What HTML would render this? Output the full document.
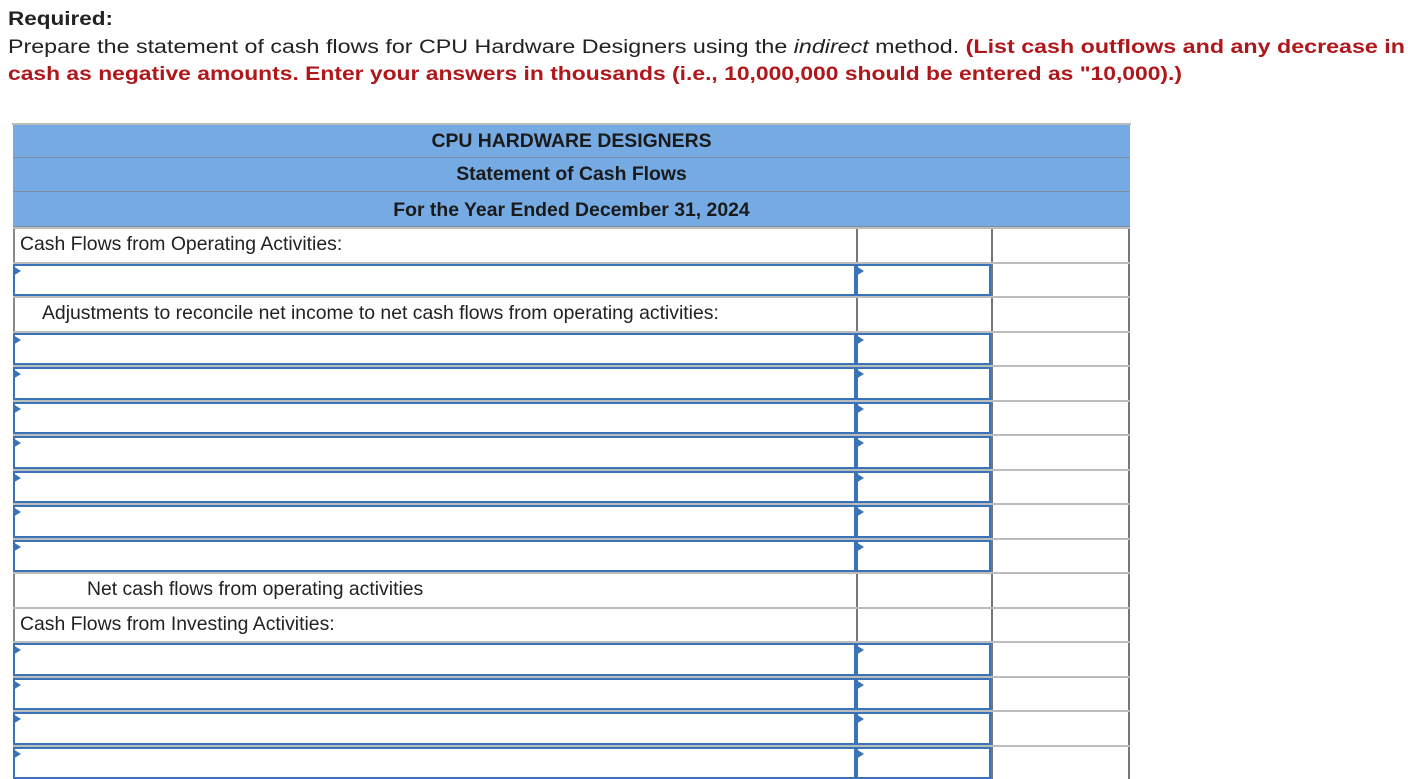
<!DOCTYPE html>
<html><head><meta charset="utf-8"><style>
body{margin:0;width:1408px;height:774px;overflow:hidden;background:#fff;position:relative;font-family:"Liberation Sans",Arial,sans-serif;color:#222}
svg.t{position:absolute;left:0;top:0}
.hdr{position:absolute;left:13px;width:1117px;background:#76aae3;border-bottom:1px solid #7d8ea3;font-weight:bold;font-size:19.4px;text-align:center;color:#1a1a1a}
.row{position:absolute;left:13px;width:1117px;border-top:2px solid #bcbcbc;box-sizing:border-box}
.lbl{position:absolute;left:0;top:0;width:843px;height:100%;border-left:2px solid #888;box-sizing:border-box;font-size:19.4px;line-height:30px;padding-left:5px;white-space:nowrap;color:#222}
.c2{position:absolute;left:843px;width:135px;top:0;height:100%;border-left:2px solid #777;box-sizing:border-box}
.c3{position:absolute;left:978px;width:139px;top:0;height:100%;border-left:2px solid #777;border-right:2px solid #777;box-sizing:border-box}
.in{position:absolute;top:0;height:100%;border:2px solid #3b73b9;box-sizing:border-box;background:#fff}
.in:before{content:"";position:absolute;left:-2px;top:0;border-left:8px solid #3b73b9;border-top:5px solid transparent;border-bottom:5px solid transparent}
</style></head><body>
<svg class="t" width="1408" height="95">
<text x="8" y="25" font-family="Liberation Sans, sans-serif" font-size="19" font-weight="bold" fill="#222" textLength="105" lengthAdjust="spacingAndGlyphs">Required:</text>
<text x="8" y="53" font-family="Liberation Sans, sans-serif" font-size="19" fill="#222" textLength="1397" lengthAdjust="spacingAndGlyphs">Prepare the statement of cash flows for CPU Hardware Designers using the <tspan font-style="italic">indirect</tspan> method. <tspan font-weight="bold" fill="#b0171b">(List cash outflows and any decrease in</tspan></text>
<text x="8" y="80" font-family="Liberation Sans, sans-serif" font-size="19" font-weight="bold" fill="#b0171b" textLength="1174" lengthAdjust="spacingAndGlyphs">cash as negative amounts. Enter your answers in thousands (i.e., 10,000,000 should be entered as "10,000).)</text>
</svg>
<div style="position:absolute;left:12px;top:123px;width:1119px;height:2px;background:#bbb"></div>
<div class="hdr" style="top:125px;height:32px;line-height:32px">CPU HARDWARE DESIGNERS</div>
<div class="hdr" style="top:158px;height:33px;line-height:33px">Statement of Cash Flows</div>
<div class="hdr" style="top:192px;height:34px;line-height:36px">For the Year Ended December 31, 2024</div>

<div class="row" style="top:227px;height:35px"><div class="lbl">Cash Flows from Operating Activities:</div><div class="c2"></div><div class="c3"></div></div>
<div class="row" style="top:262px;height:34px"><div class="in" style="left:0;width:843px"></div><div class="in" style="left:843px;width:135px"></div><div class="c3"></div></div>
<div class="row" style="top:296px;height:35px"><div class="lbl" style="padding-left:27px">Adjustments to reconcile net income to net cash flows from operating activities:</div><div class="c2"></div><div class="c3"></div></div>
<div class="row" style="top:331px;height:34px"><div class="in" style="left:0;width:843px"></div><div class="in" style="left:843px;width:135px"></div><div class="c3"></div></div>
<div class="row" style="top:365px;height:35px"><div class="in" style="left:0;width:843px"></div><div class="in" style="left:843px;width:135px"></div><div class="c3"></div></div>
<div class="row" style="top:400px;height:34px"><div class="in" style="left:0;width:843px"></div><div class="in" style="left:843px;width:135px"></div><div class="c3"></div></div>
<div class="row" style="top:434px;height:35px"><div class="in" style="left:0;width:843px"></div><div class="in" style="left:843px;width:135px"></div><div class="c3"></div></div>
<div class="row" style="top:469px;height:34px"><div class="in" style="left:0;width:843px"></div><div class="in" style="left:843px;width:135px"></div><div class="c3"></div></div>
<div class="row" style="top:503px;height:35px"><div class="in" style="left:0;width:843px"></div><div class="in" style="left:843px;width:135px"></div><div class="c3"></div></div>
<div class="row" style="top:538px;height:34px"><div class="in" style="left:0;width:843px"></div><div class="in" style="left:843px;width:135px"></div><div class="c3"></div></div>
<div class="row" style="top:572px;height:35px"><div class="lbl" style="padding-left:72px">Net cash flows from operating activities</div><div class="c2"></div><div class="c3"></div></div>
<div class="row" style="top:607px;height:34px"><div class="lbl">Cash Flows from Investing Activities:</div><div class="c2"></div><div class="c3"></div></div>
<div class="row" style="top:641px;height:35px"><div class="in" style="left:0;width:843px"></div><div class="in" style="left:843px;width:135px"></div><div class="c3"></div></div>
<div class="row" style="top:676px;height:34px"><div class="in" style="left:0;width:843px"></div><div class="in" style="left:843px;width:135px"></div><div class="c3"></div></div>
<div class="row" style="top:710px;height:35px"><div class="in" style="left:0;width:843px"></div><div class="in" style="left:843px;width:135px"></div><div class="c3"></div></div>
<div class="row" style="top:745px;height:34px"><div class="in" style="left:0;width:843px"></div><div class="in" style="left:843px;width:135px"></div><div class="c3"></div></div>
</body></html>
